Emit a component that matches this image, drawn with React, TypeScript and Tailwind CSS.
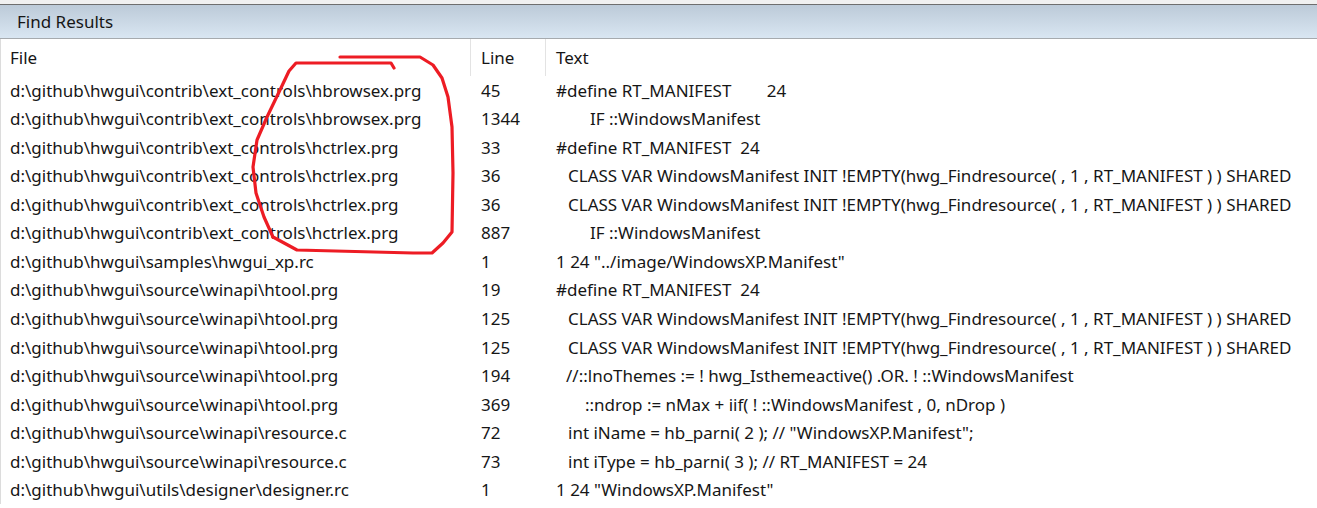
type Row = { file: string; line: string; text: string; indent: number };

const rows: Row[] = [
  { file: 'd:\\github\\hwgui\\contrib\\ext_controls\\hbrowsex.prg', line: '45', text: '#define RT_MANIFEST        24', indent: 0 },
  { file: 'd:\\github\\hwgui\\contrib\\ext_controls\\hbrowsex.prg', line: '1344', text: 'IF ::WindowsManifest', indent: 34 },
  { file: 'd:\\github\\hwgui\\contrib\\ext_controls\\hctrlex.prg', line: '33', text: '#define RT_MANIFEST  24', indent: 0 },
  { file: 'd:\\github\\hwgui\\contrib\\ext_controls\\hctrlex.prg', line: '36', text: 'CLASS VAR WindowsManifest INIT !EMPTY(hwg_Findresource( , 1 , RT_MANIFEST ) ) SHARED', indent: 12 },
  { file: 'd:\\github\\hwgui\\contrib\\ext_controls\\hctrlex.prg', line: '36', text: 'CLASS VAR WindowsManifest INIT !EMPTY(hwg_Findresource( , 1 , RT_MANIFEST ) ) SHARED', indent: 12 },
  { file: 'd:\\github\\hwgui\\contrib\\ext_controls\\hctrlex.prg', line: '887', text: 'IF ::WindowsManifest', indent: 34 },
  { file: 'd:\\github\\hwgui\\samples\\hwgui_xp.rc', line: '1', text: '1 24 "../image/WindowsXP.Manifest"', indent: 0 },
  { file: 'd:\\github\\hwgui\\source\\winapi\\htool.prg', line: '19', text: '#define RT_MANIFEST  24', indent: 0 },
  { file: 'd:\\github\\hwgui\\source\\winapi\\htool.prg', line: '125', text: 'CLASS VAR WindowsManifest INIT !EMPTY(hwg_Findresource( , 1 , RT_MANIFEST ) ) SHARED', indent: 12 },
  { file: 'd:\\github\\hwgui\\source\\winapi\\htool.prg', line: '125', text: 'CLASS VAR WindowsManifest INIT !EMPTY(hwg_Findresource( , 1 , RT_MANIFEST ) ) SHARED', indent: 12 },
  { file: 'd:\\github\\hwgui\\source\\winapi\\htool.prg', line: '194', text: '//::lnoThemes := ! hwg_Isthemeactive() .OR. ! ::WindowsManifest', indent: 10 },
  { file: 'd:\\github\\hwgui\\source\\winapi\\htool.prg', line: '369', text: '::ndrop := nMax + iif( ! ::WindowsManifest , 0, nDrop )', indent: 29 },
  { file: 'd:\\github\\hwgui\\source\\winapi\\resource.c', line: '72', text: 'int iName = hb_parni( 2 ); // "WindowsXP.Manifest";', indent: 12 },
  { file: 'd:\\github\\hwgui\\source\\winapi\\resource.c', line: '73', text: 'int iType = hb_parni( 3 ); // RT_MANIFEST = 24', indent: 12 },
  { file: 'd:\\github\\hwgui\\utils\\designer\\designer.rc', line: '1', text: '1 24 "WindowsXP.Manifest"', indent: 0 },
];

// hand-drawn red loop from the screenshot annotation
function Scribble() {
  return (
    <svg className="pointer-events-none absolute left-0 top-0" width="1317" height="508" viewBox="0 0 1317 508">
      <path
        d="M394 68 L391 63 L296 63 L289 71 L280 90 L267 117 L257 140 L253 167 L256 193 L264 217 L273 237 L297 250 L413 253 L432 253 L443 243 L452 232 L453 173 L452 127 L448 97 L442 78 L433 65 L420 57 L340 57"
        fill="none"
        stroke="#ed1c24"
        strokeWidth="3.2"
        strokeLinejoin="round"
        strokeLinecap="round"
      />
    </svg>
  );
}

export default function App() {
  return (
    <div
      className="relative h-[508px] w-[1317px] overflow-hidden bg-white text-[17px] text-[#161616]"
      style={{ fontFamily: '"Noto Sans", "Open Sans", sans-serif' }}
    >
      <div className="h-[4px] bg-[#f0f0f0]" />
      <div className="flex h-[35px] items-center border-y border-t-[#6e6e6e] border-b-[#a6aaae] bg-gradient-to-b from-[#bccad8] to-[#d9e6f2] pl-[17px]">
        Find Results
      </div>
      <div className="border-l border-[#dcdcdc]">
        <div className="grid h-[37px] grid-cols-[469px_75px_1fr] items-center">
          <div className="pl-[9px]">File</div>
          <div className="flex h-full items-center border-l border-[#e3e3e3] pl-[10px]">Line</div>
          <div className="flex h-full items-center border-l border-[#e3e3e3] pl-[10px]">Text</div>
        </div>
        {rows.map((r, i) => (
          <div key={i} className="grid h-[28.57px] grid-cols-[469px_75px_1fr] items-center">
            <div className="whitespace-nowrap pl-[9px]">{r.file}</div>
            <div className="pl-[11px]">{r.line}</div>
            <div className="whitespace-pre" style={{ paddingLeft: 11 + r.indent }}>
              {r.text}
            </div>
          </div>
        ))}
      </div>
      <Scribble />
    </div>
  );
}
